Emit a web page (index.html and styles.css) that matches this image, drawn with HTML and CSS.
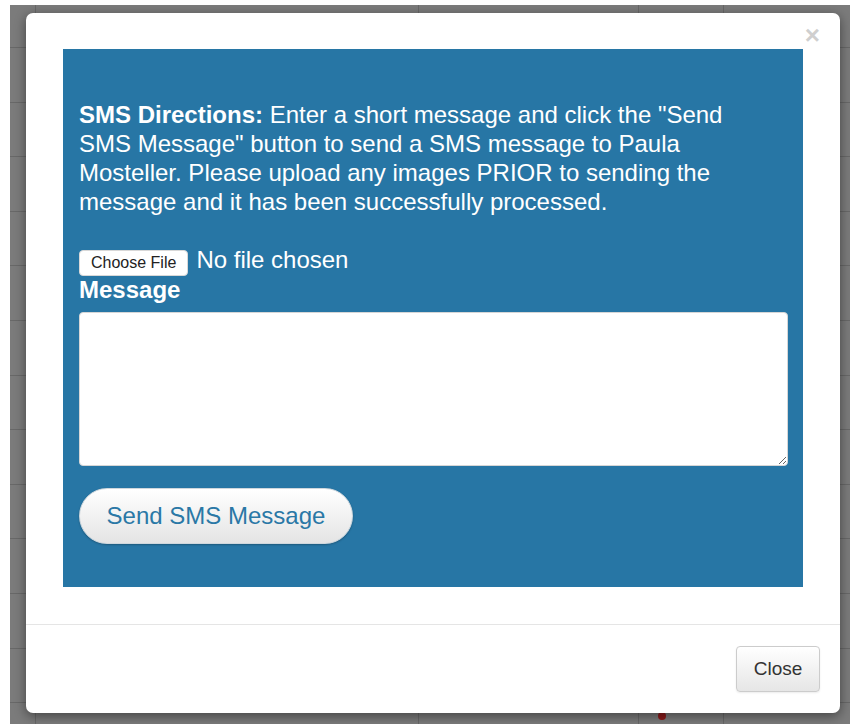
FILE: index.html
```html
<!DOCTYPE html>
<html lang="en">
<head>
  <meta charset="UTF-8" />
  <title>Send SMS</title>
  <link rel="stylesheet" href="styles.css">
</head>
<body>
  <div class="backdrop">
    <span class="pin"></span>
    <div class="modal">
      <div class="modal-body">
        <button class="close-x" type="button">&times;</button>
        <div class="sms-panel">
          <p class="directions">
            <strong>SMS Directions:</strong> Enter a short message and click the "Send SMS Message" button to send a SMS message to Paula Mosteller. Please upload any images PRIOR to sending the message and it has been successfully processed.
          </p>
          <input type="file" class="file-input">
          <label for="msg" class="msg-label">Message</label>
          <textarea id="msg" class="msg-box"></textarea>
          <button type="button" class="send-btn">Send SMS Message</button>
        </div>
      </div>
      <div class="modal-footer">
        <button type="button" class="close-btn">Close</button>
      </div>
    </div>
  </div>
</body>
</html>
```

FILE: styles.css
```css
body {
  margin: 0;
  background: #ffffff;
  font-family: 'Liberation Sans', Arial, sans-serif;
}

.backdrop {
  position: relative;
  margin: 5px 6px 0 10px;
  height: 719px;
  padding: 8px 0 0 16px;
  box-sizing: border-box;
  background-color: #7b7b7b;
  background-image:
    linear-gradient(to right, transparent 25px, #686868 25px, #686868 26px, transparent 26px),
    linear-gradient(to right, transparent 408px, #686868 408px, #686868 409px, transparent 409px),
    linear-gradient(to right, transparent 628px, #686868 628px, #686868 629px, transparent 629px),
    linear-gradient(to right, transparent 713px, #686868 713px, #686868 714px, transparent 714px),
    repeating-linear-gradient(to bottom, transparent 0, transparent 42px, #686868 42px, #686868 43px, transparent 43px, transparent 54.6px);
  overflow: hidden;
}

.pin {
  position: absolute;
  left: 648px;
  top: 707px;
  width: 8px;
  height: 8px;
  border-radius: 50%;
  background: #8b1a1a;
}

.modal {
  position: relative;
  width: 814px;
  height: 700px;
  background: #ffffff;
  border-radius: 7px;
  box-shadow: 0 3px 12px rgba(0, 0, 0, 0.45);
  display: flex;
  flex-direction: column;
}

.modal-body {
  position: relative;
  padding: 36px 37px 37px 37px;
  border-bottom: 1px solid #e5e5e5;
}

.close-x {
  position: absolute;
  top: 12px;
  right: 20px;
  border: none;
  background: none;
  padding: 0;
  font-family: 'Liberation Sans', Arial, sans-serif;
  font-size: 26px;
  font-weight: bold;
  line-height: 20px;
  color: #cfcfcf;
}

.sms-panel {
  background: #2776a5;
  height: 538px;
  padding: 0 15px 0 16px;
  box-sizing: border-box;
  color: #ffffff;
  display: flex;
  flex-direction: column;
  align-items: flex-start;
}

.directions {
  max-width: 665px;
  margin: 51px 0 30px 0;
  font-size: 24px;
  line-height: 29px;
}

.file-input {
  font-family: 'Liberation Sans', Arial, sans-serif;
  font-size: 24px;
  line-height: 28px;
  color: #ffffff;
}

.file-input::file-selector-button {
  font-family: 'Liberation Sans', Arial, sans-serif;
  font-size: 16px;
  color: #222;
  background: #ffffff;
  border: 1px solid #d8d8d8;
  border-radius: 4px;
  padding: 3px 11px;
  margin-right: 8px;
}

.msg-label {
  font-size: 24px;
  font-weight: bold;
  line-height: 28px;
  margin-bottom: 8px;
}

.msg-box {
  width: 100%;
  height: 154px;
  box-sizing: border-box;
  border: 1px solid #d6d6d6;
  border-radius: 4px;
  background: #ffffff;
  margin: 0;
}

.send-btn {
  margin-top: 22px;
  width: 274px;
  height: 56px;
  border-radius: 28px;
  border: 1px solid #cfd7dd;
  background: linear-gradient(to bottom, #ffffff, #e4e4e4);
  color: #2a78a6;
  font-family: 'Liberation Sans', Arial, sans-serif;
  font-size: 24px;
  box-shadow: 0 1px 2px rgba(0, 0, 0, 0.25);
}

.modal-footer {
  display: flex;
  justify-content: flex-end;
  padding: 21px 20px;
}

.close-btn {
  width: 84px;
  height: 46px;
  border: 1px solid #cccccc;
  border-radius: 4px;
  background: linear-gradient(to bottom, #ffffff, #e6e6e6);
  color: #333333;
  font-family: 'Liberation Sans', Arial, sans-serif;
  font-size: 19px;
  box-shadow: 0 1px 2px rgba(0, 0, 0, 0.08);
}
```
